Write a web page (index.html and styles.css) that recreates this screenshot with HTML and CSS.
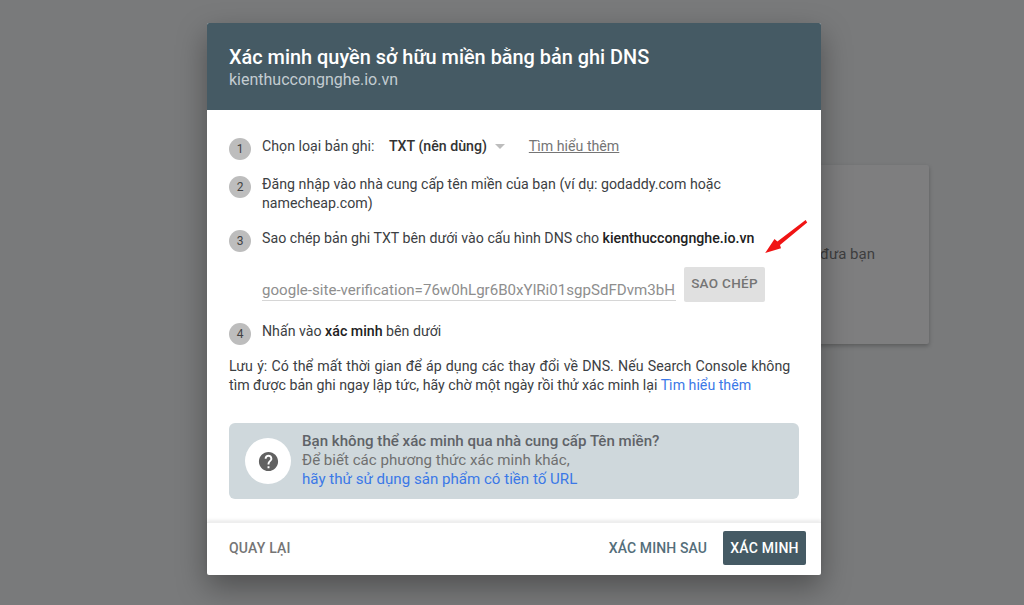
FILE: index.html
```html
<!DOCTYPE html>
<html lang="vi">
  <head>
    <meta charset="UTF-8" />
    <title>Xác minh quyền sở hữu miền</title>
    <link rel="stylesheet" href="styles.css">
  </head>
  <body>
    <div class="page">
      <div class="bg-card">
        <p class="bg-text">đưa bạn</p>
      </div>
    </div>

    <div class="dialog">
      <div class="dialog-head">
        <h1 class="dialog-title">Xác minh quyền sở hữu miền bằng bản ghi DNS</h1>
        <div class="dialog-domain">kienthuccongnghe.io.vn</div>
      </div>

      <div class="dialog-body">
        <div class="step step-1">
          <span class="step-num">1</span>
          <div class="step-text">
            Chọn loại bản ghi:
            <span class="record-type">TXT (nên dùng)</span>
            <span class="caret"></span>
            <a class="learn-gray">Tìm hiểu thêm</a>
          </div>
        </div>
        <div class="step step-2">
          <span class="step-num">2</span>
          <div class="step-text">Đăng nhập vào nhà cung cấp tên miền của bạn (ví dụ: godaddy.com hoặc namecheap.com)</div>
        </div>
        <div class="step step-3">
          <span class="step-num">3</span>
          <div class="step-text">Sao chép bản ghi TXT bên dưới vào cấu hình DNS cho <b>kienthuccongnghe.io.vn</b></div>
        </div>
        <div class="copy-row">
          <div class="copy-input">google-site-verification=76w0hLgr6B0xYlRi01sgpSdFDvm3bH</div>
          <button class="copy-btn">SAO CHÉP</button>
        </div>
        <div class="step step-4">
          <span class="step-num">4</span>
          <div class="step-text">Nhấn vào <b>xác minh</b> bên dưới</div>
        </div>
        <p class="note"><span class="note-first">Lưu ý: Có thể mất thời gian để áp dụng các thay đổi về DNS. Nếu Search Console không</span> tìm được bản ghi ngay lập tức, hãy chờ một ngày rồi thử xác minh lại <a class="link">Tìm hiểu thêm</a></p>

        <div class="help-box">
          <div class="help-icon">
            <svg width="23" height="23" viewBox="0 0 24 24">
              <path fill="#616161" d="M12 2C6.48 2 2 6.48 2 12s4.48 10 10 10 10-4.48 10-10S17.52 2 12 2zm1 17h-2v-2h2v2zm2.07-7.75l-.9.92C13.45 12.9 13 13.5 13 15h-2v-.5c0-1.1.45-2.1 1.17-2.83l1.24-1.26c.37-.36.59-.86.59-1.41 0-1.1-.9-2-2-2s-2 .9-2 2H8c0-2.21 1.79-4 4-4s4 1.79 4 4c0 .88-.36 1.68-.93 2.25z"/>
            </svg>
          </div>
          <div class="help-text">
            <b>Bạn không thể xác minh qua nhà cung cấp Tên miền?</b><br />
            Để biết các phương thức xác minh khác,<br />
            <a class="link">hãy thử sử dụng sản phẩm có tiền tố URL</a>
          </div>
        </div>
      </div>

      <div class="dialog-foot">
        <button class="btn-back">QUAY LẠI</button>
        <div class="foot-right">
          <button class="btn-later">XÁC MINH SAU</button>
          <button class="btn-verify">XÁC MINH</button>
        </div>
      </div>

      <svg class="arrow" width="52" height="36" viewBox="0 0 52 36">
        <path fill="#f01414" d="M48.6 1 L50.2 3.6 L23 26 L24 29.2 L8.2 34 L17.5 20 L20.4 22.6 Z"/>
      </svg>
    </div>
  </body>
</html>
```

FILE: styles.css
```css
* {
  box-sizing: border-box;
}
body {
  margin: 0;
  background: #797a7b;
  font-family: Roboto, "Noto Sans", sans-serif;
  overflow: hidden;
}
.page {
  display: flex;
  justify-content: flex-end;
  height: 605px;
  padding: 165px 95px 0 0;
}
.bg-card {
  width: 400px;
  height: 179px;
  background: #7e7e7f;
  border-radius: 2px;
  box-shadow: 0 2px 4px rgba(0, 0, 0, 0.25);
  display: flex;
  justify-content: flex-end;
}
.bg-text {
  margin: 80px 54px 0 0;
  font-size: 15px;
  color: #3e3e3f;
}
.dialog {
  position: absolute;
  left: 207px;
  top: 23px;
  width: 614px;
  height: 552px;
  background: #fff;
  border-radius: 2px;
  display: flex;
  flex-direction: column;
  box-shadow: 0 12px 30px rgba(0, 0, 0, 0.35);
}
.dialog-head {
  height: 87px;
  flex: none;
  background: #455a64;
  padding: 23px 22px 0;
  border-radius: 2px 2px 0 0;
}
.dialog-title {
  margin: 0;
  font-size: 19.9px;
  line-height: 23px;
  font-weight: 500;
  color: #fff;
}
.dialog-domain {
  margin-top: 1px;
  font-size: 16px;
  line-height: 20px;
  color: #c3ccd1;
}
.dialog-body {
  flex: 1;
  padding: 27px 22px 0;
  font-size: 14.2px;
  line-height: 19px;
  color: #3c4043;
}
.step {
  display: flex;
  gap: 11px;
}
.step-2 {
  margin-top: 15px;
}
.step-3 {
  margin-top: 16px;
}
.step-4 {
  margin-top: 20px;
}
.step-num {
  flex: none;
  width: 22px;
  height: 22px;
  margin-top: 1px;
  border-radius: 50%;
  background: #bdbdbd;
  color: #424242;
  font-size: 12px;
  line-height: 23px;
  text-align: center;
}
.step-text {
  flex: 1;
}
.step-text b {
  font-weight: 500;
  color: #212121;
}
.record-type {
  margin-left: 11px;
  font-weight: 500;
  color: #333;
}
.caret {
  display: inline-block;
  margin: 0 21px 2px 4px;
  border-left: 5.5px solid transparent;
  border-right: 5.5px solid transparent;
  border-top: 5.5px solid #bdbdbd;
}
.learn-gray {
  color: #757575;
  text-decoration: underline;
}
.copy-row {
  display: flex;
  gap: 8px;
  margin: 15px 0 0 33px;
}
.copy-input {
  width: 414px;
  height: 34px;
  padding-top: 14px;
  overflow: hidden;
  white-space: nowrap;
  color: #8e8e8e;
  font-size: 15.1px;
  line-height: 19px;
  border-bottom: 1px solid #d6d6d6;
}
.copy-btn {
  width: 81px;
  height: 35px;
  padding: 0 0 3px;
  border: none;
  border-radius: 2px;
  background: #e0e0e0;
  color: #757575;
  font: 500 13.5px Roboto, sans-serif;
  letter-spacing: 0.3px;
}
.note {
  margin: 12px 0 0;
}
.note-first {
  display: block;
  word-spacing: 0.7px;
  white-space: nowrap;
}
.link {
  color: #3b78e7;
}
.help-box {
  display: flex;
  align-items: center;
  gap: 11px;
  height: 76px;
  margin-top: 28px;
  padding-left: 16px;
  background: #cfd8dc;
  border-radius: 6px;
  color: #707070;
  font-size: 15.1px;
}
.help-text {
  padding-bottom: 2px;
}
.help-box b {
  font-weight: 500;
  color: #5f6368;
}
.help-icon {
  width: 46px;
  height: 46px;
  border-radius: 50%;
  background: #fff;
  display: flex;
  align-items: center;
  justify-content: center;
}
.dialog-foot {
  flex: none;
  height: 53px;
  display: flex;
  align-items: center;
  justify-content: space-between;
  padding: 0 15px 3px 22px;
  border-top: 1px solid #eee;
  box-shadow: 0 -2px 3px rgba(0, 0, 0, 0.08);
}
.dialog-foot button {
  border: none;
  background: none;
  padding: 0;
  font: 500 14px Roboto, sans-serif;
  letter-spacing: 0.2px;
}
.foot-right {
  display: flex;
  align-items: center;
  gap: 16px;
}
.dialog-foot .btn-back {
  color: #757575;
}
.dialog-foot .btn-later {
  color: #546e7a;
  letter-spacing: 0.1px;
}
.dialog-foot .btn-verify {
  width: 83px;
  height: 34px;
  border-radius: 2px;
  background: #455a64;
  color: #fff;
}
.arrow {
  position: absolute;
  left: 550px;
  top: 196px;
}
```
